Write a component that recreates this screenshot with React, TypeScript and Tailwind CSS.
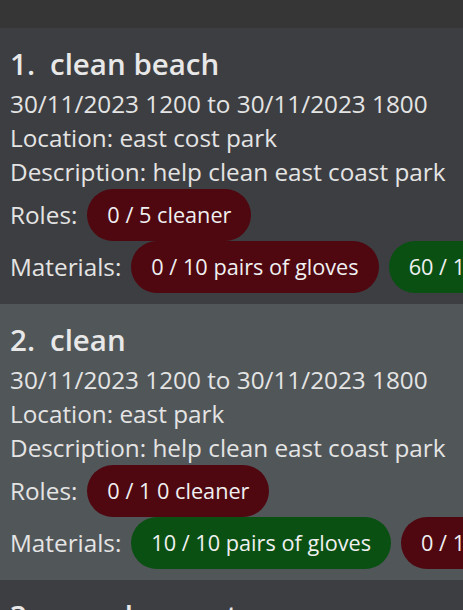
const font = { fontFamily: '"Open Sans", "Noto Sans", sans-serif' }

type Chip = { label: string; done: boolean }

interface EventItem {
  index: number
  name: string
  time: string
  location: string
  description: string
  roles: Chip[]
  materials: Chip[]
}

const events: EventItem[] = [
  {
    index: 1,
    name: "clean beach",
    time: "30/11/2023 1200 to 30/11/2023 1800",
    location: "east cost park",
    description: "help clean east coast park",
    roles: [{ label: "0 / 5 cleaner", done: false }],
    materials: [
      { label: "0 / 10 pairs of gloves", done: false },
      { label: "60 / 100 trash bags", done: true },
    ],
  },
  {
    index: 2,
    name: "clean",
    time: "30/11/2023 1200 to 30/11/2023 1800",
    location: "east park",
    description: "help clean east coast park",
    roles: [{ label: "0 / 1 0 cleaner", done: false }],
    materials: [
      { label: "10 / 10 pairs of gloves", done: true },
      { label: "0 / 100 trash bags", done: false },
    ],
  },
]

const Pill = ({ chip }: { chip: Chip }) => (
  <span
    className={`shrink-0 whitespace-nowrap rounded-full px-5 h-[52px] flex items-center text-[21.7px] font-medium text-[#f0f0f0] ${
      chip.done ? "bg-[#0a5013]" : "bg-[#4f0710]"
    }`}
  >
    {chip.label}
  </span>
)

const ChipRow = ({ title, chips }: { title: string; chips: Chip[] }) => (
  <div className="flex items-center gap-[10px] h-[52px]">
    <span className="shrink-0">{title}</span>
    {chips.map((c) => (
      <Pill key={c.label} chip={c} />
    ))}
  </div>
)

const EventCard = ({ ev, shade }: { ev: EventItem; shade: string }) => (
  <div className={`${shade} pl-[10px] pt-[13px] h-[276px] text-[#e4e4e4]`}>
    <div className="flex font-semibold text-[29.5px] leading-[46px] text-[#e8e8e8]">
      <span className="w-[40px]">{ev.index}.</span>
      <span>{ev.name}</span>
    </div>
    <div className="text-[24.3px] leading-[34px]">
      <div>{ev.time}</div>
      <div>Location: {ev.location}</div>
      <div>Description: {ev.description}</div>
    </div>
    <div className="text-[24.3px]">
      <ChipRow title="Roles:" chips={ev.roles} />
      <ChipRow title="Materials:" chips={ev.materials} />
    </div>
  </div>
)

export default function App() {
  return (
    <div className="w-[463px] h-[610px] overflow-hidden bg-[#3d3e41]" style={font}>
      <div className="h-[28px] bg-[#363636]" />
      <EventCard ev={events[0]} shade="bg-[#3d3e41]" />
      <EventCard ev={events[1]} shade="bg-[#515659]" />
      <div className="bg-[#3d3e41] pl-[10px] pt-[13px] text-[#e8e8e8]">
        <div className="flex font-semibold text-[29.5px] leading-[46px]">
          <span className="w-[40px]">3.</span>
          <span>recycle event</span>
        </div>
      </div>
    </div>
  )
}
